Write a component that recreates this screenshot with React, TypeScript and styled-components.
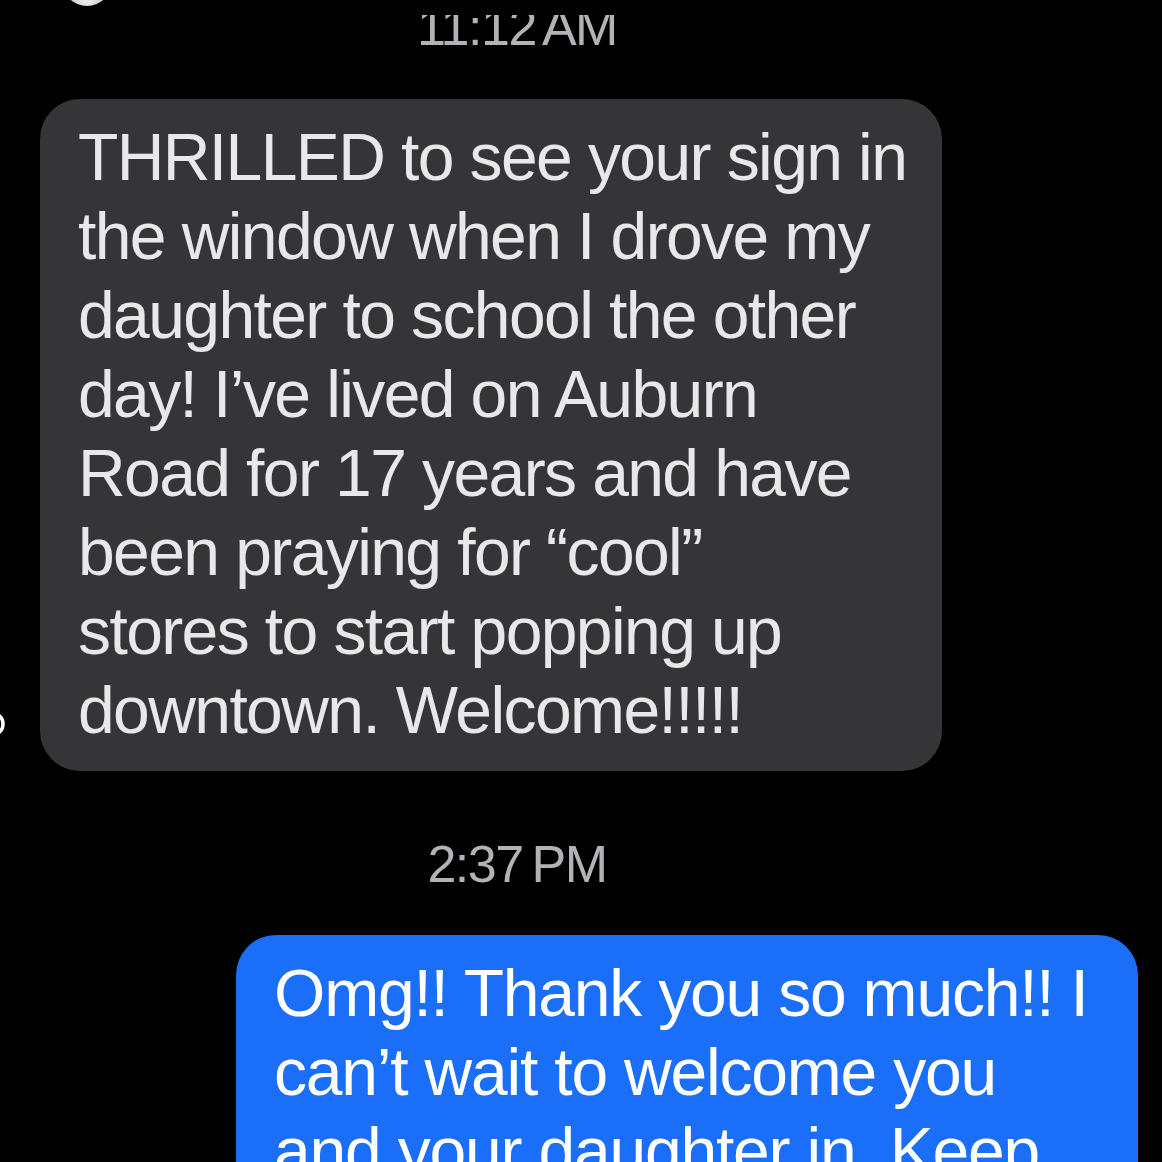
import React from "react";
import styled, { createGlobalStyle } from "styled-components";

const GlobalStyle = createGlobalStyle`
  html, body {
    margin: 0;
    padding: 0;
    background: #000;
    overflow: hidden;
  }
  body {
    font-family: "Liberation Sans", Arial, sans-serif;
  }
`;

const incoming = [
  "THRILLED to see your sign in",
  "the window when I drove my",
  "daughter to school the other",
  "day! I\u2019ve lived on Auburn",
  "Road for 17 years and have",
  "been praying for \u201Ccool\u201D",
  "stores to start popping up",
  "downtown. Welcome!!!!!",
];

const outgoing = [
  "Omg!! Thank you so much!! I",
  "can\u2019t wait to welcome you",
  "and your daughter in. Keep",
];

function App() {
  return (
    <Screen>
      <GlobalStyle />
      <NavBar>
        <Avatar />
      </NavBar>
      <TopStampClip>
        <Stamp>11:12 AM</Stamp>
      </TopStampClip>

      <IncomingRow>
        <Edge>
          <svg width="10" height="26" viewBox="0 0 10 26">
            <path d="M-6 2 C 6 6, 6 20, -6 24" fill="none" stroke="#fff" strokeWidth="3.5" strokeLinecap="round" />
          </svg>
        </Edge>
        <Bubble $kind="in">
          {incoming.map((l) => (
            <Line key={l}>{l}</Line>
          ))}
        </Bubble>
      </IncomingRow>

      <MidStamp>2:37 PM</MidStamp>

      <OutgoingRow>
        <Bubble $kind="out">
          {outgoing.map((l) => (
            <Line key={l}>{l}</Line>
          ))}
        </Bubble>
      </OutgoingRow>
    </Screen>
  );
}

const Screen = styled.div`
  width: 1162px;
  height: 1162px;
  background: #000;
  display: flex;
  flex-direction: column;
  overflow: hidden;
`;

const NavBar = styled.div`
  height: 15px;
  flex-shrink: 0;
  display: flex;
  padding-left: 62px;
  overflow: hidden;
`;

const Avatar = styled.div`
  width: 50px;
  height: 50px;
  margin-top: -44px;
  border-radius: 50%;
  background: radial-gradient(circle at 50% 85%, #f2f2f2 0%, #bdbdbd 45%, #5a5a5a 80%);
`;

const TopStampClip = styled.div`
  height: 30px;
  flex-shrink: 0;
  overflow: hidden;
  display: flex;
  justify-content: center;
  padding-right: 128px;
`;

const Stamp = styled.div`
  font-size: 52px;
  line-height: 1;
  color: #b3b3b7;
  margin-top: -14px;
  letter-spacing: -1.5px;
  word-spacing: -4px;
`;

const MidStamp = styled(Stamp)`
  margin-top: 67px;
  margin-bottom: 45px;
  text-align: center;
  padding-right: 128px;
`;

const IncomingRow = styled.div`
  display: flex;
  align-items: flex-end;
  margin-top: 54px;
  flex-shrink: 0;
`;

const Edge = styled.div`
  width: 40px;
  height: 26px;
  margin-bottom: 34px;
  display: flex;
  flex-shrink: 0;
`;

const OutgoingRow = styled.div`
  display: flex;
  justify-content: flex-end;
  padding-right: 24px;
  flex-shrink: 0;
`;

const Bubble = styled.div<{ $kind: "in" | "out" }>`
  width: 902px;
  box-sizing: border-box;
  border-radius: 40px;
  padding: 19px 38px 21px;
  font-size: 66px;
  line-height: 79px;
  letter-spacing: ${(p) => (p.$kind === "in" ? "-1.6px" : "-1.2px")};
  background: ${(p) => (p.$kind === "in" ? "#353537" : "#1b6ef7")};
  color: ${(p) => (p.$kind === "in" ? "#e8e8ea" : "#ffffff")};
  padding-bottom: ${(p) => (p.$kind === "in" ? "21px" : "120px")};
`;

const Line = styled.div`
  white-space: nowrap;
`;

export default App;
